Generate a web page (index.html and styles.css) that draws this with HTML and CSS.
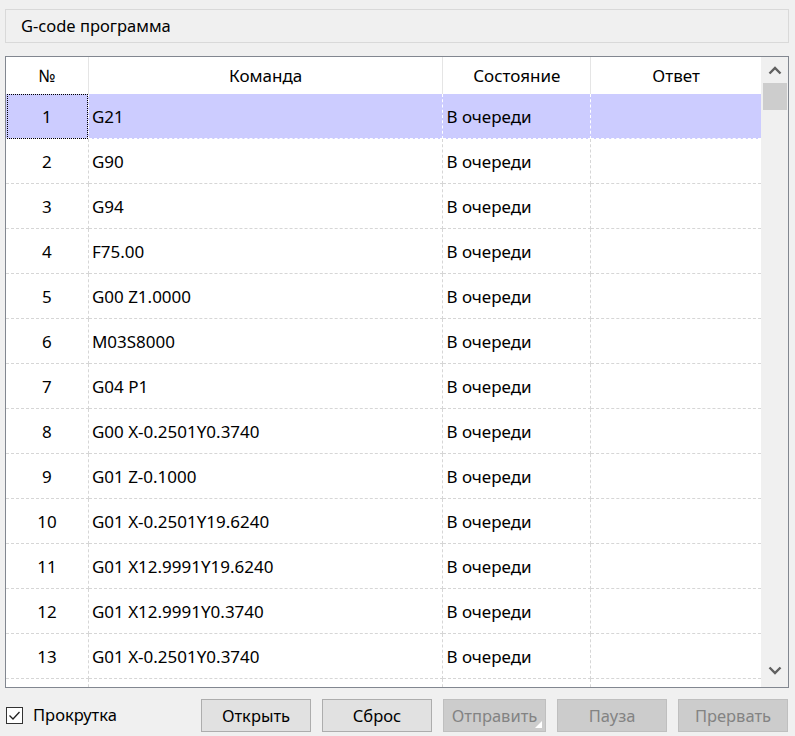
FILE: index.html
```html
<!DOCTYPE html>
<html lang="ru">
<head>
<meta charset="utf-8">
<link rel="stylesheet" href="styles.css">
</head>
<body>
<div class="app">
  <div class="title">G-code программа</div>
  <div class="table">
    <div class="grid">
      <div class="head">
        <div class="hc c1">№</div>
        <div class="hc c2">Команда</div>
        <div class="hc c3">Состояние</div>
        <div class="hc c4">Ответ</div>
      </div>
      <div class="body" id="body"></div>
    </div>
    <div class="scroll">
      <div class="arrow up"><svg width="14" height="9" viewBox="0 0 14 9"><path d="M1.5 7.5 L7 2 L12.5 7.5" fill="none" stroke="#606060" stroke-width="2.4"/></svg></div>
      <div class="thumb"></div>
      <div class="track"></div>
      <div class="arrow down"><svg width="14" height="9" viewBox="0 0 14 9"><path d="M1.5 1.5 L7 7 L12.5 1.5" fill="none" stroke="#606060" stroke-width="2.4"/></svg></div>
    </div>
  </div>
  <div class="footer">
    <div class="check"><span class="box"><svg width="15" height="15" viewBox="0 0 15 15"><path d="M2.5 7.5 L6 11 L12.5 4" fill="none" stroke="#202020" stroke-width="1.3"/></svg></span><span class="lbl">Прокрутка</span></div>
    <div class="buttons">
      <div class="btn">Открыть</div>
      <div class="btn">Сброс</div>
      <div class="btn dis">Отправить<svg class="grip" width="7" height="7" viewBox="0 0 7 7"><path d="M7 0 L7 7 L0 7 Z" fill="#fff"/></svg></div>
      <div class="btn dis">Пауза</div>
      <div class="btn dis">Прервать</div>
    </div>
  </div>
</div>
<script>
var cmds=["G21","G90","G94","F75.00","G00 Z1.0000","M03S8000","G04 P1","G00 X-0.2501Y0.3740","G01 Z-0.1000","G01 X-0.2501Y19.6240","G01 X12.9991Y19.6240","G01 X12.9991Y0.3740","G01 X-0.2501Y0.3740",""];
var b=document.getElementById('body');
cmds.forEach(function(c,i){
  var r=document.createElement('div');
  r.className='row'+(i===0?' sel':'');
  var n=c?String(i+1):'';
  var s=c?'В очереди':'';
  r.innerHTML='<div class="cell c1">'+n+'</div><div class="cell c2">'+c+'</div><div class="cell c3">'+s+'</div><div class="cell c4"></div>';
  b.appendChild(r);
});
</script>
</body>
</html>
```
FILE: styles.css
```css
* { box-sizing: border-box; }
html, body { margin: 0; padding: 0; }
body {
  background: #f0f0f0;
  font-family: "Noto Sans", "Open Sans", sans-serif;
  font-size: 16.5px;
  color: #000;
  width: 795px;
  height: 736px;
  overflow: hidden;
}
.app { padding: 9px 6px 0 5px; }
.title {
  height: 34px;
  border: 1px solid #d9d9d9;
  padding-left: 15px;
  line-height: 31px;
}
.table {
  margin-top: 13px;
  height: 632px;
  border: 1px solid #828790;
  background: #fff;
  display: flex;
  overflow: hidden;
  font-size: 17px;
}
.grid { width: 756px; display: flex; flex-direction: column; overflow: hidden; }
.head { display: flex; height: 37px; flex: none; }
.hc {
  text-align: center;
  line-height: 37px;
  border-right: 1px solid #e5e5e5;
}
.c1 { width: 83px; }
.c2 { width: 355px; }
.c3 { width: 148px; }
.c4 { width: 170px; }
.hc.c4 { border-right: none; }
.body { flex: 1; overflow: hidden; }
.row { display: flex; height: 45px; }
.cell {
  height: 45px;
  line-height: 45px;
  border-right: 1px dashed #d6d6d6;
  border-bottom: 1px dashed #d6d6d6;
  padding-left: 3px;
  white-space: nowrap;
}
.cell.c4 { border-right: none; }
.cell.c1 { text-align: center; padding-left: 0; position: relative; }
.row.sel .cell { background: #ccccff; border-right-color: #fff; border-bottom-color: #fff; }
.row.sel .cell.c1::after {
  content: "";
  position: absolute;
  left: 1px; top: 0; right: 0; bottom: -1px;
  border: 1px dotted #000;
}
.scroll {
  width: 27px;
  background: #f0f0f0;
  border-left: 1px solid #f0f0f0;
  display: flex;
  flex-direction: column;
}
.arrow { height: 26px; display: flex; align-items: center; justify-content: center; }
.thumb { height: 27px; margin: 0 1px; background: #cdcdcd; }
.track { flex: 1; }
.arrow.down { height: 30px; padding-bottom: 4px; }
.footer {
  display: flex;
  align-items: center;
  margin-top: 10px;
  height: 34px;
}
.check { display: flex; align-items: center; gap: 10px; width: 196px; padding-left: 1px; }
.lbl { line-height: 22px; }
.box {
  width: 17px; height: 17px;
  border: 1px solid #333;
  background: #fff;
  display: flex; align-items: center; justify-content: center;
}
.buttons { display: flex; gap: 11px; }
.btn {
  width: 110px;
  height: 33px;
  border: 1px solid #adadad;
  background: #e1e1e1;
  display: flex;
  align-items: center;
  justify-content: center;
  position: relative;
}
.btn:nth-child(3) { width: 103px; }
.btn.dis { background: #cccccc; border-color: #bfbfbf; color: #838383; }
.grip { position: absolute; right: 3px; bottom: 3px; }
```
